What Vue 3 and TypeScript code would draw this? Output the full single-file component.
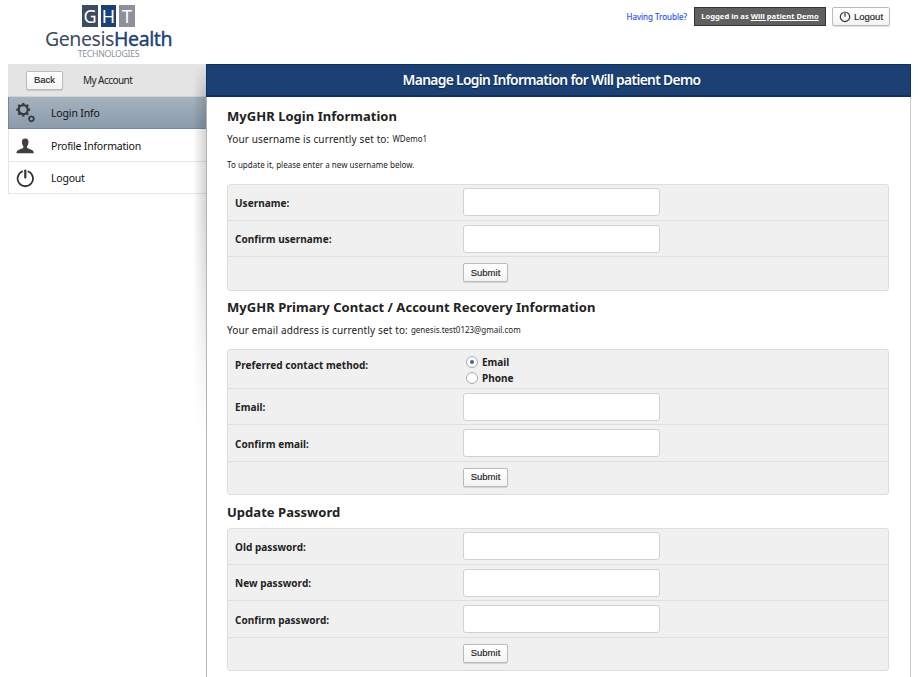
<script setup lang="ts">
import { ref } from 'vue'

interface Row { label: string; kind: 'input' | 'radio' | 'submit'; height: number; type?: string }
interface Section {
  id: string
  title: string
  intro?: string
  value?: string
  note?: string
  rows: Row[]
}

const contact = ref('Email')
const sections: Section[] = [
  {
    id: 'login',
    title: 'MyGHR Login Information',
    intro: 'Your username is currently set to:',
    value: 'WDemo1',
    note: 'To update it, please enter a new username below.',
    rows: [
      { label: 'Username:', kind: 'input', height: 36 },
      { label: 'Confirm username:', kind: 'input', height: 36 },
      { label: '', kind: 'submit', height: 34 },
    ],
  },
  {
    id: 'contact',
    title: 'MyGHR Primary Contact / Account Recovery Information',
    intro: 'Your email address is currently set to:',
    value: 'genesis.test0123@gmail.com',
    rows: [
      { label: 'Preferred contact method:', kind: 'radio', height: 39 },
      { label: 'Email:', kind: 'input', height: 36 },
      { label: 'Confirm email:', kind: 'input', height: 37 },
      { label: '', kind: 'submit', height: 33 },
    ],
  },
  {
    id: 'password',
    title: 'Update Password',
    rows: [
      { label: 'Old password:', kind: 'input', height: 36, type: 'password' },
      { label: 'New password:', kind: 'input', height: 36, type: 'password' },
      { label: 'Confirm password:', kind: 'input', height: 37, type: 'password' },
      { label: '', kind: 'submit', height: 33 },
    ],
  },
]
const teeth = [0, 45, 90, 135, 180, 225, 270, 315]
</script>

<template>
  <div class="page">
    <header class="header">
      <div class="logo">
        <div class="tiles"><span class="tile g">G</span><span class="tile h">H</span><span class="tile t">T</span></div>
        <div class="brand"><span class="dark">Genesis</span><span class="blue">Health</span></div>
        <div class="tech">TECHNOLOGIES</div>
      </div>
      <nav class="tools">
        <a class="trouble">Having Trouble?</a>
        <span class="who">Logged in as <u>Will patient Demo</u></span>
        <button class="btn out">
          <svg width="12" height="12" viewBox="0 0 12 12" fill="none" stroke="#333" stroke-width="1.2" stroke-linecap="round"><path d="M4.3 1.5a4.7 4.7 0 1 0 3.4 0M6 .8v4.4" /></svg>
          <span>Logout</span>
        </button>
      </nav>
    </header>

    <div class="body">
      <aside class="side">
        <div class="sidebar-top"><button class="btn back">Back</button><span class="account">My Account</span></div>
        <a class="item active">
          <svg class="icon" width="20" height="20" viewBox="0 0 20 20" fill="none" stroke="#3a3a3a">
            <circle cx="7.2" cy="6.7" r="4.5" stroke-width="2.2" />
            <path v-for="a in teeth" :key="a" d="M7.2 -.2v2.2" stroke-width="2.3" :transform="`rotate(${a} 7.2 6.7)`" />
            <circle cx="15.4" cy="15.8" r="2.3" stroke-width="1.6" />
            <path v-for="a in teeth" :key="'s' + a" d="M15.4 12.4v1.1" stroke-width="1.1" :transform="`rotate(${a} 15.4 15.8)`" />
          </svg>
          <span class="wide">Login Info</span>
        </a>
        <a class="item">
          <svg class="icon" width="20" height="20" viewBox="0 0 20 20" fill="#3f3f3f"><path d="M9.2 2.5c2.4 0 3.4 1.5 3.3 3.8-.1 1.9-.7 3-1.3 3.8-.4.7-.2 1.9.5 2.2l3.7 1.4c1.5.6 2.3 1.3 2.4 3.5H.5c.1-2.2.9-2.9 2.4-3.5l3.8-1.4c.7-.3.9-1.5.5-2.2-.6-.8-1.2-1.9-1.3-3.8-.1-2.3 1-3.8 3.3-3.8z" /></svg>
          <span>Profile Information</span>
        </a>
        <a class="item">
          <svg class="icon" width="20" height="20" viewBox="0 0 20 20" fill="none" stroke="#333" stroke-width="1.8" stroke-linecap="round"><path d="M6.2 3.5a7.7 7.7 0 1 0 6.2 0" /><path d="M9.3 2.6v7" stroke-width="2.2" /></svg>
          <span>Logout</span>
        </a>
        <div class="shade"></div>
      </aside>

      <main class="main">
        <h1 class="title"><span>Manage Login Information for Will patient Demo</span></h1>
        <section v-for="s in sections" :key="s.id" class="section" :class="s.id">
          <h2>{{ s.title }}</h2>
          <p v-if="s.intro" class="intro"><span>{{ s.intro }}</span><small>{{ s.value }}</small></p>
          <p v-if="s.note" class="note">{{ s.note }}</p>
          <form class="table" @submit.prevent>
            <div v-for="(r, i) in s.rows" :key="i" class="row" :class="r.kind" :style="{ height: r.height + 'px' }">
              <label class="label">{{ r.label }}</label>
              <input v-if="r.kind === 'input'" class="field" :type="r.type ?? 'text'" />
              <div v-else-if="r.kind === 'radio'" class="radios">
                <label v-for="o in ['Email', 'Phone']" :key="o" @click="contact = o">
                  <i class="dot" :class="{ on: contact === o }"></i><span>{{ o }}</span>
                </label>
              </div>
              <button v-else class="btn">Submit</button>
            </div>
          </form>
        </section>
      </main>
    </div>
  </div>
</template>

<style>
body { margin: 0; background: #fff; overflow: hidden; }
</style>

<style scoped>
* { box-sizing: border-box; }
.page { width: 920px; height: 677px; overflow: hidden; font-family: "Noto Sans", "Open Sans", sans-serif; color: #222; white-space: nowrap; }
.header { height: 64px; display: flex; justify-content: space-between; padding: 0 30px 0 46px; }
.logo { width: 125px; padding-top: 5px; display: flex; flex-direction: column; align-items: center; }
.tiles { display: flex; gap: 3px; height: 22px; }
.tile { width: 15.5px; height: 22px; line-height: 22px; text-align: center; color: #fff; font-size: 18px; }
.g { background: #3c4b60; }
.h { background: #1b4179; }
.t { background: #8c919d; }
.brand { height: 22px; line-height: 22px; margin-top: 1px; font-size: 19.5px; letter-spacing: -0.4px; }
.blue { color: #1b4179; -webkit-text-stroke: .35px #1b4179; }
.dark { color: #3c4b60; }
.tech { font-size: 8.7px; line-height: 8px; letter-spacing: -0.3px; color: #8c919d; }
.tools { display: flex; align-items: flex-start; padding-top: 7px; }
.trouble { font-size: 8px; line-height: 20px; color: #2456f0; margin-right: 7px; -webkit-text-stroke: .15px #2456f0; }
.who { width: 132px; height: 19px; border: 1px solid #333; background: #606060; color: #fff; font-size: 7.6px; font-weight: 700; line-height: 17px; text-align: center; margin-right: 6px; }
.btn { font-family: "Liberation Sans", Arial, sans-serif; color: #222; border: 1px solid #bbb; border-radius: 2px; background: linear-gradient(#fff, #f3f3f3); padding: 0; font-size: 9.5px; line-height: 1; box-shadow: 0 1px 1px rgba(0, 0, 0, .12); -webkit-text-stroke: .15px #222; }
.out { width: 58px; height: 19px; display: flex; align-items: center; justify-content: center; gap: 3px; }
.body { display: flex; padding-left: 8px; height: 613px; }
.side { position: relative; width: 198px; }
.sidebar-top { height: 33px; background: #e4e4e4; display: flex; align-items: center; padding-left: 18px; border-bottom: 1px solid #cfd3d6; }
.back { width: 37px; height: 19px; }
.account { margin-left: 20px; font-size: 10px; letter-spacing: -0.55px; }
.item { display: flex; align-items: center; height: 32.4px; padding: 1px 0 0 7px; border-bottom: 1px solid #e5e5e5; border-left: 1px solid #e5e5e5; font-size: 10.5px; letter-spacing: -0.21px; color: #111; }
.wide { letter-spacing: -.15px; }
.item.active { padding-top: 0; background: linear-gradient(#a5b3be, #8a9bac); border-color: #75889b; }
.icon { margin-right: 15px; flex: none; }
.shade { position: absolute; right: 0; top: 0; width: 13px; height: 370px; background: linear-gradient(to right, rgba(0, 0, 0, 0), rgba(0, 0, 0, .17)); -webkit-mask-image: linear-gradient(transparent, #000 8%, #000 40%, transparent); mask-image: linear-gradient(transparent, #000 8%, #000 40%, transparent); }
.main { width: 705px; border-left: 1px solid #b5b5b5; border-right: 1px solid #ccc; height: 613px; }
.title { margin: 0 -1px; height: 33px; padding-right: 14px; background: #1b4174; border: 1px solid #0e3164; border-bottom: 2px solid #0f2f60; text-align: center; line-height: 30px; color: #fff; font-size: 13.8px; font-weight: 600; letter-spacing: -0.66px; text-shadow: 0 1px 1px #0a2550; }
.section { margin-left: 20px; width: 662px; }
h2 { margin: 0; font-size: 13px; line-height: 18px; font-weight: 700; letter-spacing: .03px; }
.intro { margin: 0; font-size: 10px; line-height: 14px; letter-spacing: .13px; display: flex; align-items: center; }
.intro small { font-size: 8px; margin-left: 3px; letter-spacing: 0; }
.note { margin: 0; font-size: 8px; line-height: 12px; letter-spacing: .03px; }
.login { padding-top: 10px; }
.login .intro { margin-top: 7px; }
.login .note { margin-top: 13px; }
.login .table { margin-top: 13px; }
.contact { padding-top: 7px; }
.contact .intro { margin-top: 7px; }
.contact .table { margin-top: 12px; }
.password { padding-top: 8px; }
.password .table { margin-top: 7px; }
.table { border: 1px solid #ddd; border-radius: 3px; background: #f0f0f0; }
.row { display: flex; align-items: center; padding-left: 7px; }
.row + .row { border-top: 1px solid #dfdfdf; }
.row:first-child { margin-top: -1px; }
.label { width: 228px; font-size: 10px; font-weight: 700; letter-spacing: .04px; }
.input .label { padding-top: 1px; }
.field { width: 197px; height: 28px; border: 1px solid #d2d2d2; border-radius: 3px; background: #fff; padding: 0 6px; outline: none; }
.submit { padding-bottom: 2px; }
.submit .btn { width: 45px; height: 19px; }
.radio { align-items: flex-start; }
.radio .label { line-height: 14px; padding-top: 9px; }
.radios { padding: 5px 0 0 3px; }
.radios label { display: flex; align-items: center; height: 16px; font-size: 10px; font-weight: 700; }
.radios span { padding-bottom: 1px; }
.dot { width: 12px; height: 12px; border: 1px solid #aaa; border-radius: 50%; background: #fff; margin-right: 4px; display: flex; align-items: center; justify-content: center; }
.dot.on::after { content: ""; width: 4px; height: 4px; border-radius: 50%; background: #3f6590; }
</style>
